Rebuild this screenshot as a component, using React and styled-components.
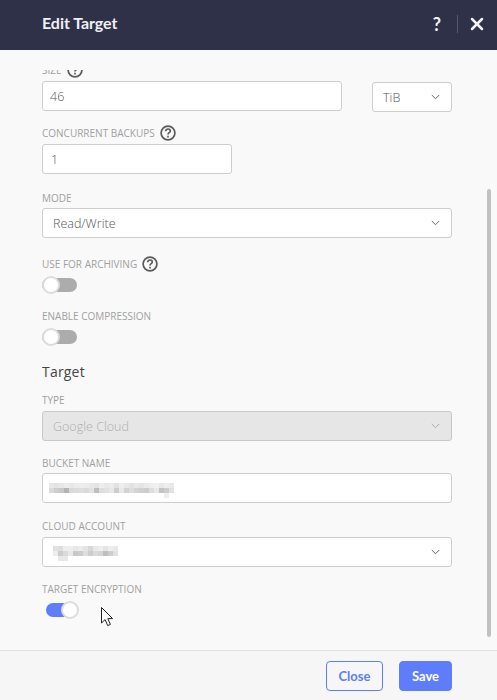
import React from 'react';
import styled, { createGlobalStyle } from 'styled-components';
import { X } from 'lucide-react';

const Global = createGlobalStyle`
  html, body { margin: 0; padding: 0; height: 100%; overflow: hidden; background: #f9f9f9; }
  #root { height: 100%; }
  * { box-sizing: border-box; }
`;

const Modal = styled.div`
  position: relative;
  display: flex;
  flex-direction: column;
  width: 497px;
  height: 700px;
  background: #f9f9f9;
  font-family: "Open Sans", sans-serif;
`;
const Header = styled.header`
  flex: none;
  display: flex;
  align-items: center;
  height: 50px;
  padding: 0 10px 2px 42px;
  background: #2e3148;
  color: #fff;
`;
const Title = styled.h1`
  flex: 1;
  margin: 0 0 3px;
  font: 700 16px "Lato", sans-serif;
  letter-spacing: -0.05px;
  color: #f0f0f4;
`;
const HelpGlyph = styled.span`
  font: 700 18px "Lato", sans-serif;
  margin-right: 16px;
  color: #f2f2f5;
`;
const Divider = styled.span`
  width: 1px;
  height: 18px;
  background: #55586e;
  margin-right: 9px;
`;
const Body = styled.main`
  position: relative;
  flex: 1;
  min-height: 0;
  padding: 20px 45px 0 42px;
`;
const Viewport = styled.div`
  height: 100%;
  overflow: hidden;
`;
const Form = styled.form`
  margin-top: -8px;
`;
const Scrollbar = styled.div`
  position: absolute;
  top: 139px;
  right: 6px;
  width: 4px;
  height: 448px;
  border-radius: 2px;
  background: #c1c1c1;
`;
const Field = styled.div`
  margin-top: ${p => p.$top || 0}px;
  width: ${p => p.$width || '100%'};
`;
const Row = styled.div`
  display: flex;
  align-items: flex-start;
  gap: 30px;
`;
const Label = styled.label`
  display: flex;
  align-items: center;
  gap: 5px;
  height: 16px;
  margin-bottom: ${p => p.$gap ?? 3}px;
  font-size: 10px;
  color: #a0a0a0;
  text-transform: uppercase;
  white-space: nowrap;
`;
const Box = styled.div`
  display: flex;
  align-items: center;
  justify-content: space-between;
  width: ${p => p.$width || '100%'};
  height: 30px;
  margin-top: ${p => p.$top || 0}px;
  padding: 0 ${p => p.$select ? 11 : 6}px 0 ${p => p.$left || 10}px;
  border: 1px solid ${p => p.$disabled ? '#c8c8c8' : '#cdcdcd'};
  border-radius: 3px;
  background: ${p => p.$disabled ? '#e6e6e6' : '#fff'};
  color: ${p => p.$disabled ? '#aeaeae' : '#555'};
  font-size: 12.5px;
  font-weight: 300;
`;
const Heading = styled.h2`
  margin: 18px 0 0;
  height: 20px;
  line-height: 20px;
  font-size: 14px;
  font-weight: 400;
  letter-spacing: 0.2px;
  color: #444;
`;
const SwitchTrack = styled.div`
  position: relative;
  width: ${p => p.$on ? 28 : 35}px;
  height: 14px;
  margin: ${p => p.$on ? '6px 0 0 4px' : '6px 0 0'};
  border-radius: 7px;
  background: ${p => p.$on ? '#5f7cfb' : '#acacac'};
`;
const SwitchKnob = styled.span`
  position: absolute;
  top: -2px;
  left: ${p => p.$on ? 15 : 0}px;
  width: 18px;
  height: 18px;
  border-radius: 50%;
  background: #fff;
  border: 2px solid #dcdcdc;
`;
const Footer = styled.footer`
  flex: none;
  display: flex;
  justify-content: flex-end;
  align-items: flex-start;
  gap: 16px;
  height: 50px;
  padding: 10px 45px 0 0;
  background: #f6f6f6;
  border-top: 1px solid #e2e2e2;
`;
const Button = styled.button`
  width: ${p => p.$primary ? 53 : 57}px;
  height: 30px;
  padding: 0;
  border: 1px solid #5f7cfb;
  border-radius: 4px;
  background: ${p => p.$primary ? '#5f7cfb' : 'transparent'};
  color: ${p => p.$primary ? '#fff' : '#5f7cfb'};
  font: 700 13px "Lato", sans-serif;
`;
const Cursor = styled.svg`
  position: absolute;
  left: 100px;
  top: 606px;
`;
const MosaicArt = styled.svg`
  margin-top: ${p => p.$shift}px;
`;

const Chevron = ({ color = '#666' }) => (
  <svg width="9" height="6" viewBox="0 0 9 6" fill="none" stroke={color} strokeWidth="1">
    <path d="M.8 1 4.5 4.7 8.2 1" />
  </svg>
);

const Help = () => (
  <svg width="16" height="16" viewBox="0 0 16 16" fill="none" stroke="#5a5a5a" strokeWidth="1.7">
    <circle cx="8" cy="8" r="6.9" />
    <path d="M5.7 6.2c0-1.4 1-2.2 2.3-2.2s2.3.8 2.3 2c0 1.7-2.3 1.7-2.3 3.5" />
    <path d="M8 10.8v1.6" />
  </svg>
);

const Switch = ({ on }) => (
  <SwitchTrack $on={on}><SwitchKnob $on={on} /></SwitchTrack>
);

const shade = v => `rgb(${v},${v},${v})`;
const Mosaic = ({ rows, shift, cell = 5 }) => {
  const w = Math.max(...rows.map(r => r.length)) * cell;
  return (
    <MosaicArt $shift={shift} width={w} height={rows.length * cell} viewBox={`0 0 ${w} ${rows.length * cell}`} shapeRendering="crispEdges">
      {rows.map((r, y) => r.map((v, x) => v < 255 && (
        <rect key={`${x}-${y}`} x={x * cell} y={y * cell} width={cell} height={cell} fill={shade(v)} />
      )))}
    </MosaicArt>
  );
};

const bucket = [
  [232, 228, 232, 236, 232, 236, 238, 236, 232, 228, 238, 232, 236, 226, 238, 232, 226, 232, 228, 234, 238, 240, 232, 238, 232],
  [218, 205, 200, 180, 218, 220, 222, 218, 225, 190, 222, 225, 232, 205, 232, 210, 222, 212, 208, 205, 222, 232, 195, 205, 225],
  [255, 255, 255, 255, 255, 255, 255, 255, 255, 255, 255, 255, 255, 255, 255, 255, 255, 255, 255, 255, 255, 255, 255, 238, 255],
];
const account = [
  [225, 222, 238, 238, 232, 236, 228, 215, 232, 238, 228, 238, 232],
  [238, 205, 218, 232, 200, 205, 222, 205, 218, 212, 190, 205, 225],
  [255, 232, 232, 255, 255, 255, 255, 255, 255, 255, 255, 255, 255],
];

export default function App() {
  return (
    <Modal>
      <Global />
      <Header>
        <Title>Edit Target</Title>
        <HelpGlyph>?</HelpGlyph>
        <Divider />
        <X size={20} strokeWidth={3} color="#f2f2f5" />
      </Header>
      <Body>
        <Viewport>
          <Form>
            <Field>
              <Label>Size <Help /></Label>
              <Row>
                <Box $width="300px" $left={7}>46</Box>
                <Box $width="80px" $select $top={1}>TiB<Chevron /></Box>
              </Row>
            </Field>
            <Field $top={13}>
              <Label>Concurrent Backups <Help /></Label>
              <Box $width="190px" $left={8}>1</Box>
            </Field>
            <Field $top={16}>
              <Label $gap={2}>Mode</Label>
              <Box $select>Read/Write<Chevron /></Box>
            </Field>
            <Field $top={18}>
              <Label $gap={0}>Use for archiving <Help /></Label>
              <Switch />
            </Field>
            <Field $top={16}>
              <Label $gap={0}>Enable compression</Label>
              <Switch />
            </Field>
            <Heading>Target</Heading>
            <Field $top={10}>
              <Label>Type</Label>
              <Box $select $disabled>Google Cloud<Chevron color="#aaa" /></Box>
            </Field>
            <Field $top={14}>
              <Label $gap={2}>Bucket Name</Label>
              <Box $left={6}><Mosaic rows={bucket} shift={5} /></Box>
            </Field>
            <Field $top={15}>
              <Label>Cloud Account</Label>
              <Box $select><Mosaic rows={account} shift={3} /><Chevron /></Box>
            </Field>
            <Field $top={14}>
              <Label $gap={0}>Target Encryption</Label>
              <Switch on />
            </Field>
          </Form>
        </Viewport>
        <Scrollbar />
      </Body>
      <Footer>
        <Button type="button">Close</Button>
        <Button type="button" $primary>Save</Button>
      </Footer>
      <Cursor width="14" height="22" viewBox="0 0 14 22">
        <path d="M1.5 1.5V17l3.6-3.4 2.6 6 2.7-1.2-2.6-5.8h4.8z" fill="#fff" stroke="#222" strokeWidth="1" strokeLinejoin="miter" />
      </Cursor>
    </Modal>
  );
}
